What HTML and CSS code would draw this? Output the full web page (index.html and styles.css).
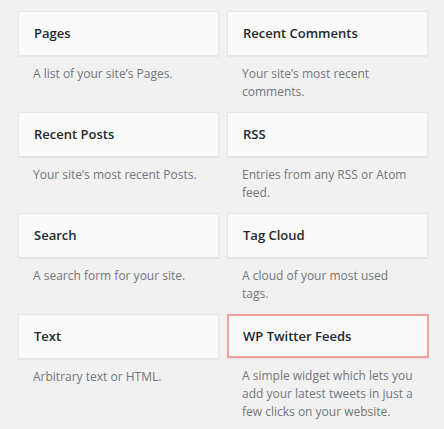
FILE: index.html
```html
<!DOCTYPE html>
<html lang="en">
<head>
<meta charset="utf-8">
<title>Available Widgets</title>
<link rel="stylesheet" href="styles.css">
</head>
<body>
<div class="widgets">
  <div class="widget">
    <div class="widget-top"><h3>Pages</h3></div>
    <div class="widget-desc">A list of your site’s Pages.</div>
  </div>
  <div class="widget">
    <div class="widget-top"><h3>Recent Comments</h3></div>
    <div class="widget-desc">Your site’s most recent comments.</div>
  </div>
  <div class="widget">
    <div class="widget-top"><h3>Recent Posts</h3></div>
    <div class="widget-desc">Your site’s most recent Posts.</div>
  </div>
  <div class="widget">
    <div class="widget-top"><h3>RSS</h3></div>
    <div class="widget-desc">Entries from any RSS or Atom feed.</div>
  </div>
  <div class="widget">
    <div class="widget-top"><h3>Search</h3></div>
    <div class="widget-desc">A search form for your site.</div>
  </div>
  <div class="widget">
    <div class="widget-top"><h3>Tag Cloud</h3></div>
    <div class="widget-desc">A cloud of your most used tags.</div>
  </div>
  <div class="widget">
    <div class="widget-top"><h3>Text</h3></div>
    <div class="widget-desc">Arbitrary text or HTML.</div>
  </div>
  <div class="widget">
    <div class="widget-top highlighted"><h3>WP Twitter Feeds</h3></div>
    <div class="widget-desc">A simple widget which lets you add your latest tweets in just a few clicks on your website.</div>
  </div>
</div>
</body>
</html>
```
FILE: styles.css
```css
html, body {
  margin: 0;
  padding: 0;
  background: #f1f1f1;
}
body {
  font-family: "Open Sans", "Noto Sans", sans-serif;
  font-size: 13px;
}
.widgets {
  display: grid;
  grid-template-columns: 201px 201px;
  column-gap: 8px;
  row-gap: 11px;
  padding: 11px 0 0 18px;
  align-items: start;
}
.widget-top {
  background: #fafafa;
  border: 1px solid #e5e5e5;
  box-shadow: 0 1px 1px rgba(0, 0, 0, 0.04);
}
.widget-top h3 {
  margin: 0;
  padding: 15px;
  font-size: 13px;
  line-height: 13px;
  font-weight: 600;
  color: #23282d;
}
.widget-top.highlighted {
  border: 2px solid #f4a0a0;
  margin-right: -1px;
}
.widget-top.highlighted h3 {
  padding: 14px 14px 13px;
}
.widget-desc {
  padding: 9px 15px 0;
  font-size: 12px;
  line-height: 18px;
  color: #72777c;
}
```
